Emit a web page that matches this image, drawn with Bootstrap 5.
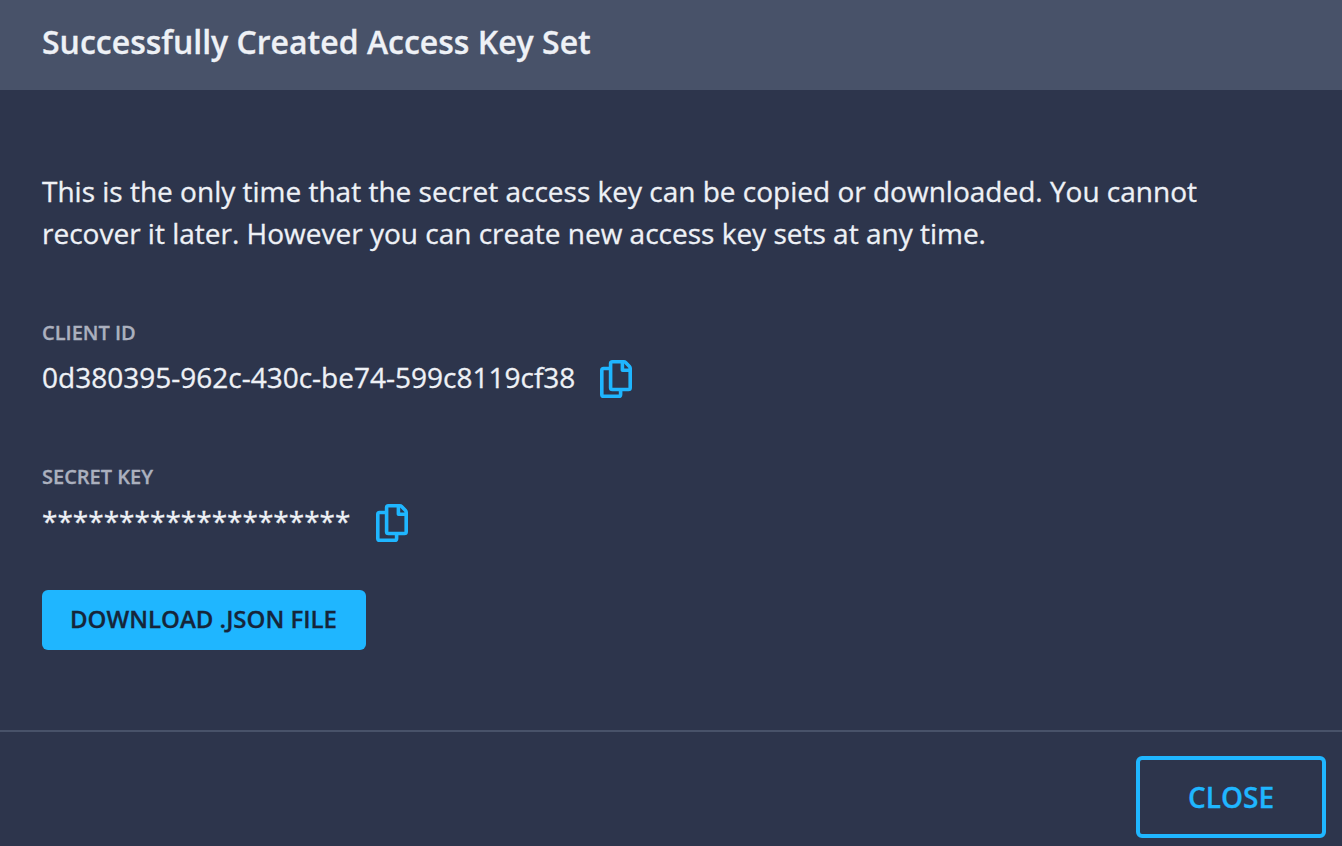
<!DOCTYPE html>
<html lang="en">
<head>
<meta charset="utf-8">
<meta name="viewport" content="width=device-width, initial-scale=1">
<title>Access Key Set</title>
<link href="https://cdn.jsdelivr.net/npm/bootstrap@5.3.0/dist/css/bootstrap.min.css" rel="stylesheet">
<style>
body{font-family:"Open Sans",sans-serif;background:#2d354c;color:#eef1f6;overflow:hidden;-webkit-text-stroke:.3px currentColor}
.dialog-panel{height:846px}
.dialog-head{height:90px;background:#485269;padding:0 42px 7px}
.dialog-title{font-size:32px;font-weight:600;line-height:44px}
.dialog-main{padding:80px 42px 0}
.intro-text{font-size:28px;line-height:42px}
.field-label{font-size:20px;font-weight:600;line-height:28px;color:#abb0be}
.field-row{margin-top:9px;gap:25px}
.field-value{font-size:28px;line-height:42px}
.client-field{margin-top:65px}
.secret-field{margin-top:65px}
.secret-field .field-row{gap:26px}
.copy-btn{color:#1fb6ff;line-height:0}
.btn-download,.btn-download:hover{width:324px;height:60px;margin-top:48px;background:#1fb6ff;color:#16253a;border:0;border-radius:6px;font-size:24px;font-weight:600;padding:0 1px 2px 0}
.dialog-foot{height:116px;border-top:2px solid #485269;padding:24px 16px 0}
.btn-close-dialog{width:190px;height:82px;border:4px solid #1fb6ff;border-radius:6px;color:#1fb6ff;font-size:28px;font-weight:600}
</style>
</head>
<body>
<svg class="d-none" xmlns="http://www.w3.org/2000/svg">
<symbol id="copy-icon" viewBox="0 0 32 38"><g fill="none" stroke="currentColor" stroke-width="3.6" stroke-linejoin="round"><path d="M10.6 8.5H3.6Q1.8 8.5 1.8 10.3V34.4Q1.8 36.2 3.6 36.2H18.8Q20.6 36.2 20.6 34.4V29.5"/><path d="M12.4 1.8H23.8Q24.9 1.8 25.6 2.5L29.5 6.4Q30.2 7.1 30.2 8.2V27.7Q30.2 29.5 28.4 29.5H12.4Q10.6 29.5 10.6 27.7V3.6Q10.6 1.8 12.4 1.8Z"/><path d="M22.4 2V10.3H30"/></g></symbol>
</svg>
<div class="dialog-panel d-flex flex-column">
<header class="dialog-head d-flex align-items-center"><h1 class="dialog-title m-0">Successfully Created Access Key Set</h1></header>
<main class="dialog-main flex-grow-1">
<p class="intro-text mb-0">This is the only time that the secret access key can be copied or downloaded. You cannot<br>recover it later. However you can create new access key sets at any time.</p>
<section class="client-field"><div class="field-label">CLIENT ID</div>
<div class="field-row d-flex align-items-end"><span class="field-value">0d380395-962c-430c-be74-599c8119cf38</span><button class="copy-btn btn p-0 border-0" aria-label="Copy client ID"><svg width="32" height="38"><use href="#copy-icon"/></svg></button></div></section>
<section class="secret-field"><div class="field-label">SECRET KEY</div>
<div class="field-row d-flex align-items-end"><span class="field-value">********************</span><button class="copy-btn btn p-0 border-0" aria-label="Copy secret key"><svg width="32" height="38"><use href="#copy-icon"/></svg></button></div></section>
<button class="btn btn-download">DOWNLOAD .JSON FILE</button>
</main>
<footer class="dialog-foot d-flex justify-content-end align-items-start"><button class="btn btn-close-dialog p-0">CLOSE</button></footer>
</div>
<script src="https://cdn.jsdelivr.net/npm/bootstrap@5.3.0/dist/js/bootstrap.bundle.min.js"></script>
</body>
</html>
